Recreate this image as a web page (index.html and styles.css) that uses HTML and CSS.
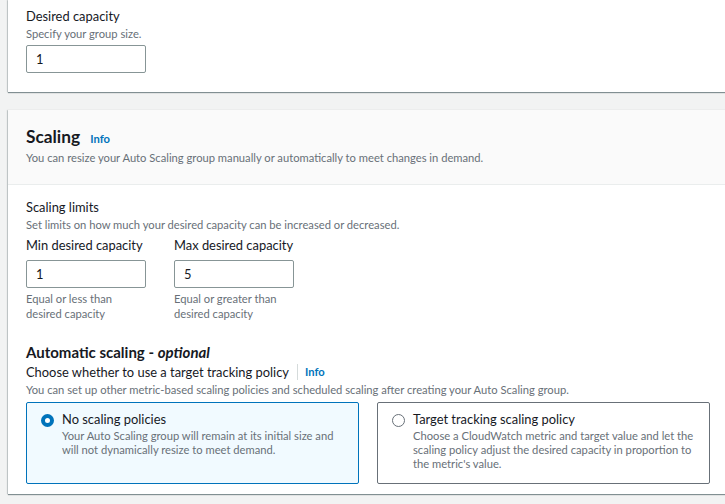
FILE: index.html
```html
<!DOCTYPE html>
<html>
<head>
<meta charset="utf-8">
<link rel="stylesheet" href="styles.css">
</head>
<body>
<div class="page">
  <section class="card card-top">
    <div class="field">
      <div class="label">Desired capacity</div>
      <div class="desc">Specify your group size.</div>
      <div class="input">1</div>
    </div>
  </section>

  <section class="card card-scaling">
    <header class="card-header">
      <h2 class="title">Scaling <span class="info">Info</span></h2>
      <div class="desc">You can resize your Auto Scaling group manually or automatically to meet changes in demand.</div>
    </header>
    <div class="card-body">
      <div class="label">Scaling limits</div>
      <div class="desc">Set limits on how much your desired capacity can be increased or decreased.</div>
      <div class="limits">
        <div class="limit">
          <div class="label">Min desired capacity</div>
          <div class="input">1</div>
          <div class="constraint">Equal or less than<br>desired capacity</div>
        </div>
        <div class="limit">
          <div class="label">Max desired capacity</div>
          <div class="input">5</div>
          <div class="constraint">Equal or greater than<br>desired capacity</div>
        </div>
      </div>

      <h3 class="subhead">Automatic scaling - <i>optional</i></h3>
      <div class="label choose">Choose whether to use a target tracking policy <span class="sep"></span><span class="info">Info</span></div>
      <div class="desc">You can set up other metric-based scaling policies and scheduled scaling after creating your Auto Scaling group.</div>

      <div class="tiles">
        <div class="tile selected">
          <span class="radio on"></span>
          <div class="tile-text">
            <div class="tile-title">No scaling policies</div>
            <div class="tile-desc">Your Auto Scaling group will remain at its initial size and will not dynamically resize to meet demand.</div>
          </div>
        </div>
        <div class="tile">
          <span class="radio"></span>
          <div class="tile-text">
            <div class="tile-title">Target tracking scaling policy</div>
            <div class="tile-desc">Choose a CloudWatch metric and target value and let the scaling policy adjust the desired capacity in proportion to the metric's value.</div>
          </div>
        </div>
      </div>
    </div>
  </section>
</div>
</body>
</html>
```

FILE: styles.css
```css
html, body {
  margin: 0;
  padding: 0;
  overflow: hidden;
}
body {
  background: #f2f3f3;
  font-family: Lato, "Open Sans", Arial, sans-serif;
  color: #16191f;
  width: 725px;
  height: 504px;
}
.page {
  padding-left: 8px;
  width: 760px;
}
.card {
  background: #fff;
  box-shadow: 0 1px 1px 0 rgba(0, 28, 36, 0.45), -1px 0 1px 0 rgba(0, 28, 36, 0.15);
}
.card-top {
  padding: 6px 18px 19px 18px;
}
.label {
  font-size: 12.9px;
  line-height: 20px;
  color: #16191f;
}
.desc {
  font-size: 11.2px;
  line-height: 16px;
  color: #687078;
}
.input {
  box-sizing: border-box;
  width: 120px;
  height: 28px;
  border: 1px solid #879596;
  border-radius: 2px;
  font-size: 12.9px;
  line-height: 26px;
  padding-left: 9px;
  color: #16191f;
  background: #fff;
}
.card-top .input {
  margin-top: 3px;
}
.card-scaling {
  margin-top: 18px;
}
.card-header {
  background: #fafafa;
  border-bottom: 1px solid #eaeded;
  padding: 16px 18px 18px 18px;
}
.title {
  margin: 0;
  font-size: 17.3px;
  line-height: 22px;
  font-weight: 700;
  color: #16191f;
}
.info {
  font-size: 11.2px;
  font-weight: 700;
  color: #0073bb;
  margin-left: 6px;
}
.card-body {
  padding: 12px 18px 10px 18px;
}
.limits {
  display: flex;
  gap: 28px;
  margin-top: 2px;
}
.limit .input {
  margin-top: 5px;
}
.constraint {
  margin-top: 3px;
  font-size: 11.2px;
  line-height: 15px;
  color: #687078;
}
.subhead {
  margin: 21px 0 0 0;
  font-size: 15px;
  line-height: 20px;
  font-weight: 700;
}
.subhead i {
  font-weight: 700;
}
.choose {
  display: flex;
  align-items: center;
}
.sep {
  display: inline-block;
  width: 1px;
  height: 16px;
  background: #d5dbdb;
  margin: 0 7px 0 8px;
}
.choose .info {
  margin-left: 0;
}
.tiles {
  display: grid;
  grid-template-columns: 333px 333px;
  column-gap: 18px;
  margin-top: 4px;
}
.tile {
  box-sizing: border-box;
  height: 82px;
  border: 1px solid #687078;
  border-radius: 2px;
  padding: 6px 14px 0 14px;
  display: flex;
  gap: 8px;
  background: #fff;
}
.tile.selected {
  border-color: #0073bb;
  background: #f1faff;
}
.radio {
  flex: none;
  box-sizing: border-box;
  width: 13px;
  height: 13px;
  margin-top: 5px;
  border: 1px solid #687078;
  border-radius: 50%;
  background: #fff;
}
.radio.on {
  border: 4px solid #0073bb;
}
.tile-title {
  font-size: 12.9px;
  line-height: 20px;
  color: #16191f;
}
.tile-desc {
  font-size: 11.2px;
  line-height: 14px;
  color: #687078;
}
```
